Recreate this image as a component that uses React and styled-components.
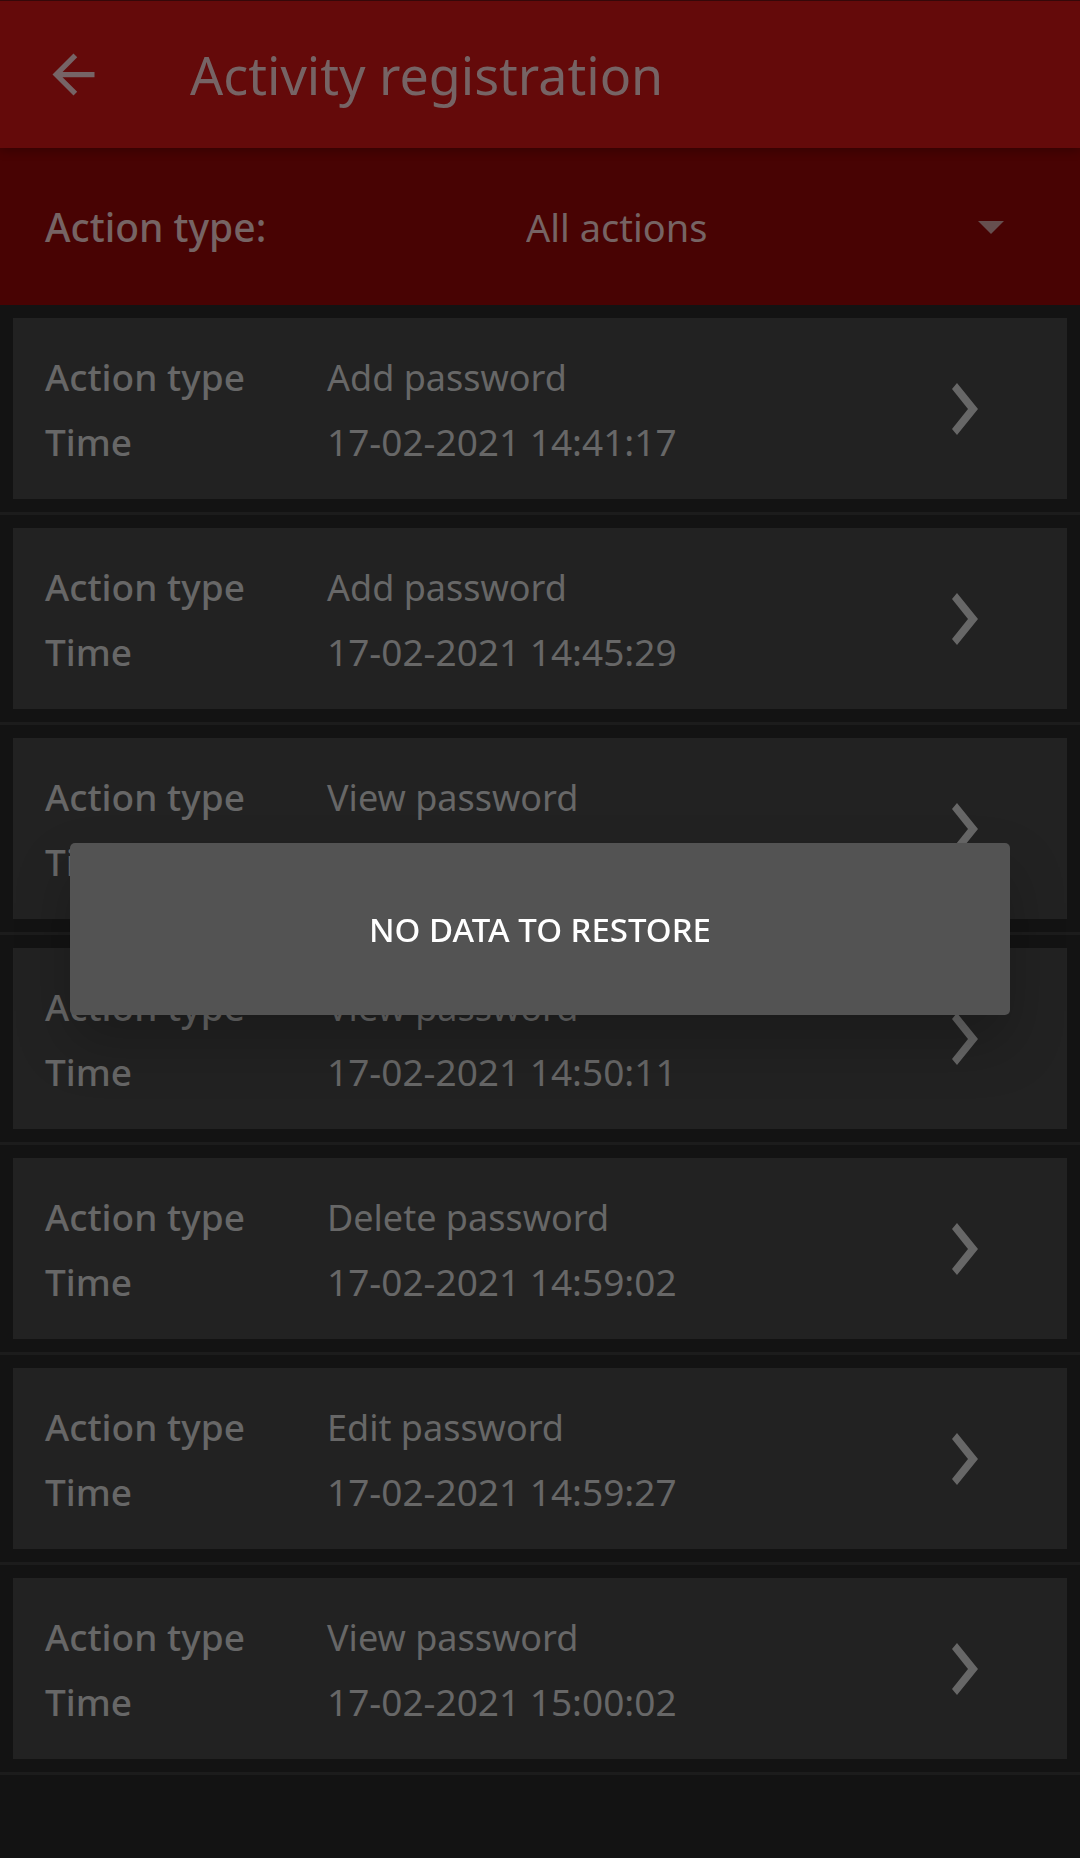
import React from "react";
import styled, { createGlobalStyle } from "styled-components";

const GlobalStyle = createGlobalStyle`
  *, *::before, *::after { box-sizing: border-box; }
  body {
    margin: 0;
    background: #131313;
    color: #676767;
    font-family: "Noto Sans", "Open Sans", sans-serif;
  }
`;

const Page = styled.main`
  min-height: 100vh;
  background: #131313;
`;

const AppBar = styled.header`
  position: relative;
  z-index: 1;
  display: flex;
  align-items: center;
  gap: 85px;
  height: 148px;
  padding: 0 42px;
  border-top: 1px solid #350809;
  background: #640a0a;
  box-shadow: 0 2px 10px rgba(0, 0, 0, 0.3);
`;

const IconButton = styled.button`
  display: flex;
  flex: none;
  padding: 0;
  border: 0;
  background: none;
  color: inherit;
  cursor: pointer;
`;

const BackButton = styled(IconButton)`
  color: #766466;
`;

const Title = styled.h1`
  margin: 0;
  color: #766465;
  font-size: 52px;
  font-weight: 400;
  line-height: 72px;
  white-space: nowrap;
`;

const FilterBar = styled.section`
  display: grid;
  grid-template-columns: 481fr 509fr;
  align-items: center;
  height: 157px;
  padding: 0 45px;
  background: #480303;
`;

const FilterLabel = styled.label`
  color: #766464;
  font-size: 39px;
  font-weight: 500;
  line-height: 52px;
`;

const SelectBox = styled.div`
  display: grid;
  align-items: center;

  > * { grid-area: 1 / 1; }

  svg {
    justify-self: end;
    margin: 2px 31px 0 0;
    pointer-events: none;
  }
`;

const Select = styled.select`
  width: 100%;
  height: 52px;
  padding: 0;
  border: 0;
  background: transparent;
  color: #766464;
  font-family: inherit;
  font-size: 38px;
  line-height: 52px;
  appearance: none;
`;

const List = styled.ul`
  margin: 0;
  padding: 0;
  list-style: none;
`;

const Item = styled.li`
  padding: 13px;
  border-bottom: 3px solid #1c1c1c;
`;

const Card = styled.article`
  display: flex;
  align-items: center;
  justify-content: space-between;
  height: 181px;
  padding: 0 89px 0 32px;
  background: #222222;
`;

const Details = styled.dl`
  display: grid;
  grid-template-columns: 282px auto;
  grid-auto-rows: 65px;
  align-items: baseline;
  margin: 0;
  padding-top: 14px;
  font-size: 37px;
  line-height: 52px;
  white-space: nowrap;
`;

const Term = styled.dt`
  font-weight: 500;
`;

const Value = styled.dd`
  margin: 0;
`;

const ActionValue = styled(Value)`
  font-size: 36px;
`;

const Overlay = styled.div`
  position: fixed;
  inset: 0;
  z-index: 2;
  display: flex;
  align-items: center;
  padding: 0 70px;
`;

const Dialog = styled.div`
  width: 100%;
  padding: 63px 24px 61px;
  border-radius: 5px;
  background: #535353;
  box-shadow: 0 28px 56px rgba(0, 0, 0, 0.22);
  text-align: center;
`;

const Message = styled.p`
  margin: 0;
  color: #ffffff;
  font-size: 33px;
  font-weight: 500;
  line-height: 48px;
`;

const entries = [
  { action: "Add password", time: "17-02-2021 14:41:17" },
  { action: "Add password", time: "17-02-2021 14:45:29" },
  { action: "View password", time: "17-02-2021 14:49:38" },
  { action: "View password", time: "17-02-2021 14:50:11" },
  { action: "Delete password", time: "17-02-2021 14:59:02" },
  { action: "Edit password", time: "17-02-2021 14:59:27" },
  { action: "View password", time: "17-02-2021 15:00:02" },
];

function BackArrow() {
  return (
    <svg width="63" height="63" viewBox="0 0 24 24" fill="currentColor" aria-hidden="true">
      <path d="M20 11H7.83l5.59-5.59L12 4l-8 8 8 8 1.41-1.41L7.83 13H20v-2z" />
    </svg>
  );
}

function Chevron() {
  return (
    <svg width="26" height="53" viewBox="0 0 26 53" fill="currentColor" aria-hidden="true">
      <path d="M5 1L26 27L5 53L0 47L16 27L0 7Z" />
    </svg>
  );
}

function Caret() {
  return (
    <svg width="26" height="13" viewBox="0 0 26 13" fill="#664f4f" aria-hidden="true">
      <path d="M0 0H26L13 13Z" />
    </svg>
  );
}

export default function App() {
  return (
    <>
      <GlobalStyle />
      <Page>
        <AppBar>
          <BackButton type="button" aria-label="Back">
            <BackArrow />
          </BackButton>
          <Title>Activity registration</Title>
        </AppBar>
        <FilterBar>
          <FilterLabel htmlFor="action-filter">Action type:</FilterLabel>
          <SelectBox>
            <Select id="action-filter" defaultValue="all">
              <option value="all">All actions</option>
            </Select>
            <Caret />
          </SelectBox>
        </FilterBar>
        <List>
          {entries.map((entry) => (
            <Item key={entry.time}>
              <Card>
                <Details>
                  <Term>Action type</Term>
                  <ActionValue>{entry.action}</ActionValue>
                  <Term>Time</Term>
                  <Value>{entry.time}</Value>
                </Details>
                <IconButton type="button" aria-label="Open entry">
                  <Chevron />
                </IconButton>
              </Card>
            </Item>
          ))}
        </List>
      </Page>
      <Overlay>
        <Dialog role="alertdialog" aria-labelledby="dialog-message">
          <Message id="dialog-message">NO DATA TO RESTORE</Message>
        </Dialog>
      </Overlay>
    </>
  );
}
